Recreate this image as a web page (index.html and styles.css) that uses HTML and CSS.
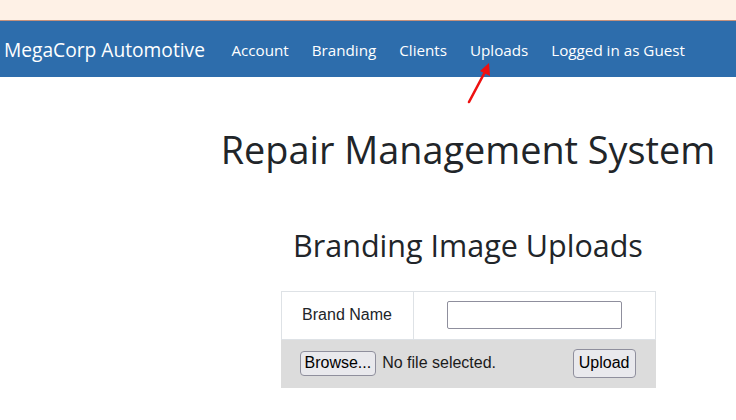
FILE: index.html
```html
<!DOCTYPE html>
<html lang="en">
<head>
<meta charset="utf-8">
<title>Repair Management System</title>
<link rel="stylesheet" href="styles.css">
</head>
<body>
<div class="topbar"></div>
<nav class="navbar">
  <a class="brand" href="#">MegaCorp Automotive</a>
  <ul class="nav-links">
    <li><a href="#">Account</a></li>
    <li><a href="#">Branding</a></li>
    <li><a href="#">Clients</a></li>
    <li class="uploads-item"><a href="#">Uploads</a>
      <svg class="arrow" width="30" height="44" viewBox="0 0 30 44">
        <line x1="4" y1="41" x2="21" y2="9" stroke="#ee1111" stroke-width="2.6" stroke-linecap="round"/>
        <polygon points="24,2 25,15 15,10" fill="#ee1111"/>
      </svg>
    </li>
    <li><a href="#">Logged in as Guest</a></li>
  </ul>
</nav>
<main class="content">
  <h1 class="title">Repair Management System</h1>
  <h2 class="subtitle">Branding Image Uploads</h2>
  <table class="upload-table">
    <tr class="name-row">
      <td class="label-cell">Brand Name</td>
      <td class="input-cell"><input class="text-input" type="text"></td>
    </tr>
    <tr class="file-row">
      <td colspan="2">
        <div class="file-bar">
          <div class="file-pick">
            <button class="btn btn-browse" type="button">Browse...</button>
            <span class="file-status">No file selected.</span>
          </div>
          <button class="btn btn-upload" type="button">Upload</button>
        </div>
      </td>
    </tr>
  </table>
</main>
</body>
</html>
```

FILE: styles.css
```css
html, body {
  margin: 0;
  padding: 0;
  background: #ffffff;
}
body {
  font-family: "Open Sans", "Noto Sans", sans-serif;
  color: #212529;
}
.topbar {
  height: 20px;
  background: #fef1e6;
  border-bottom: 1px solid #c4917c;
}
.navbar {
  height: 56px;
  background: #2d6dac;
  display: flex;
  align-items: center;
  padding-left: 4px;
}
.navbar a {
  color: #ffffff;
  text-decoration: none;
}
.brand {
  font-size: 19.2px;
  margin-right: 15px;
}
.nav-links {
  list-style: none;
  margin: 0;
  padding: 0;
  display: flex;
  position: relative;
  top: 1px;
}
.nav-links li {
  padding: 0 11.5px;
  font-size: 15.2px;
}
.uploads-item {
  position: relative;
}
.arrow {
  position: absolute;
  left: 7px;
  top: 21px;
}
.content {
  margin-left: 200px;
  text-align: center;
}
.title {
  font-weight: 400;
  font-size: 37.8px;
  margin: 50px 0 0;
  line-height: 1.2;
}
.subtitle {
  font-weight: 400;
  font-size: 30.5px;
  margin: 55px 0 0;
  line-height: 1.2;
}
.upload-table {
  margin: 27px auto 0;
  width: 375px;
  border-collapse: collapse;
  font-family: "Liberation Sans", Arial, sans-serif;
  font-size: 16px;
}
.upload-table td {
  border: 1px solid #dee2e6;
  padding: 0;
}
.name-row td {
  height: 47px;
}
.label-cell {
  width: 131px;
}
.text-input {
  width: 173px;
  height: 26px;
  box-sizing: content-box;
  padding: 0;
  border: 1px solid #8f8f9d;
  border-radius: 2px;
  vertical-align: middle;
}
.file-row td {
  background: #dcdcdc;
  border-color: #dcdcdc;
  height: 47px;
}
.file-bar {
  display: flex;
  align-items: center;
  justify-content: space-between;
  padding: 0 19px 0 18px;
}
.file-pick {
  display: flex;
  align-items: center;
  gap: 6px;
}
.btn {
  font-family: "Liberation Sans", Arial, sans-serif;
  font-size: 16px;
  color: #000;
  background: #e9e9ed;
  border: 1px solid #8f8f9d;
  border-radius: 4px;
  padding: 0 4px;
}
.btn-browse {
  height: 25px;
}
.btn-upload {
  height: 29px;
  padding: 0 5px;
}
.file-status {
  color: #1b1b1b;
}
```
